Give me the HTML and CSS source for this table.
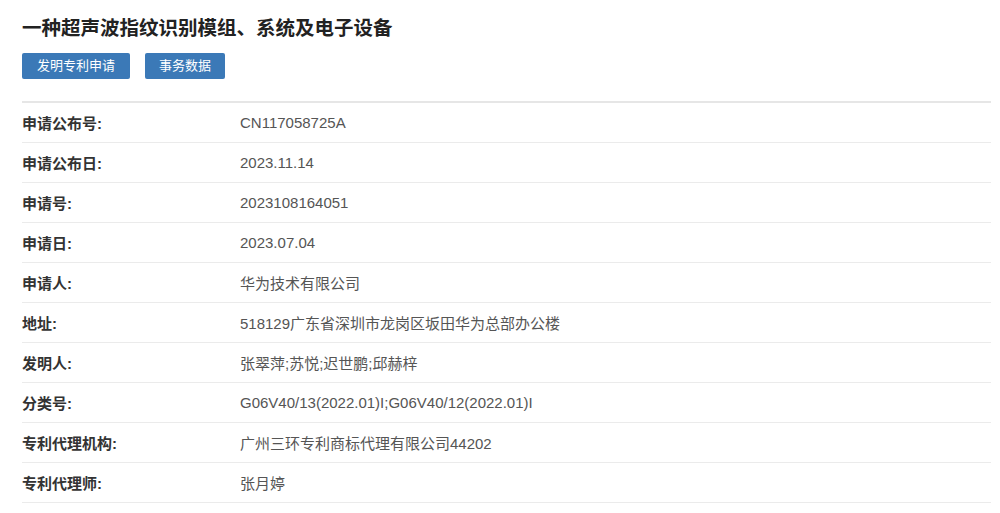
FILE: index.html
```html
<!DOCTYPE html>
<html lang="zh">
<head>
<meta charset="utf-8">
<link rel="stylesheet" href="styles.css">
</head>
<body>
<div class="page">
  <h1 class="title">一种超声波指纹识别模组、系统及电子设备</h1>
  <div class="actions">
    <a class="btn">发明专利申请</a>
    <a class="btn">事务数据</a>
  </div>
  <div class="table">
    <div class="row"><div class="label">申请公布号:</div><div class="value">CN117058725A</div></div>
    <div class="row"><div class="label">申请公布日:</div><div class="value">2023.11.14</div></div>
    <div class="row"><div class="label">申请号:</div><div class="value">2023108164051</div></div>
    <div class="row"><div class="label">申请日:</div><div class="value">2023.07.04</div></div>
    <div class="row"><div class="label">申请人:</div><div class="value">华为技术有限公司</div></div>
    <div class="row"><div class="label">地址:</div><div class="value">518129广东省深圳市龙岗区坂田华为总部办公楼</div></div>
    <div class="row"><div class="label">发明人:</div><div class="value">张翠萍;苏悦;迟世鹏;邱赫梓</div></div>
    <div class="row"><div class="label">分类号:</div><div class="value">G06V40/13(2022.01)I;G06V40/12(2022.01)I</div></div>
    <div class="row"><div class="label">专利代理机构:</div><div class="value">广州三环专利商标代理有限公司44202</div></div>
    <div class="row"><div class="label">专利代理师:</div><div class="value">张月婷</div></div>
  </div>
</div>
</body>
</html>
```
FILE: styles.css
```css
html, body {
  margin: 0;
  padding: 0;
  background: #ffffff;
}
body {
  font-family: "Liberation Sans", Arial, "Noto Sans CJK SC", sans-serif;
  color: #333;
}
.page {
  padding: 14px 9px 0 22px;
}
.title {
  margin: 0;
  font-size: 19.5px;
  line-height: 28px;
  font-weight: bold;
  color: #222;
}
.actions {
  display: flex;
  gap: 15px;
  margin-top: 11px;
}
.btn {
  display: inline-block;
  height: 26px;
  line-height: 26px;
  padding: 0 15px;
  font-size: 13px;
  color: #fff;
  background: #3b79b7;
  border-radius: 2px;
}
.actions .btn:nth-child(2) {
  padding: 0 14px;
}
.table {
  margin-top: 22px;
  border-top: 2px solid #e6e6e6;
}
.row {
  display: flex;
  height: 39px;
  align-items: center;
  border-bottom: 1px solid #ebebeb;
  font-size: 15px;
}
.label {
  width: 218px;
  font-weight: bold;
  color: #333;
}
.value {
  color: #555;
}
```
